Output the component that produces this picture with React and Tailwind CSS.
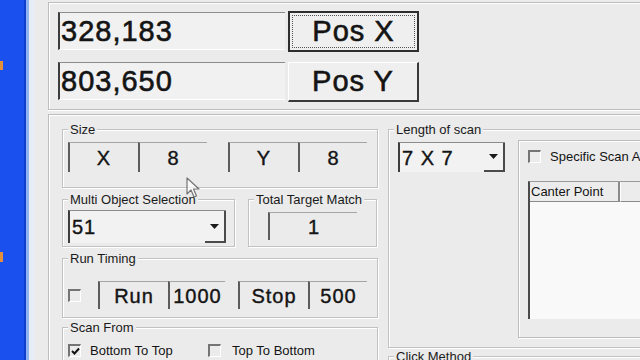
import React from "react";

function Group({ label, className = "", children }) {
  return (
    <div
      className={`relative shrink-0 border border-[#c2c2c2] shadow-[inset_1px_1px_0_#fff,1px_1px_0_#fff] ${className}`}
    >
      <span className="absolute -top-[8px] left-[5px] bg-[#ebebeb] px-[2px] text-[13px] leading-[15px] whitespace-nowrap text-[#1a1a1a]">
        {label}
      </span>
      {children}
    </div>
  );
}

function Cell({ className = "", children }) {
  return (
    <div
      className={`flex h-full shrink-0 items-center justify-center border-t border-l-2 border-t-[#a5a5a5] border-l-[#5c5c5c] text-[20px] leading-none tracking-[1px] [-webkit-text-stroke:0.4px_#141414] ${className}`}
    >
      {children}
    </div>
  );
}

function Check({ checked = false }) {
  return (
    <div className="flex h-[13px] w-[13px] shrink-0 items-center justify-center border-t-2 border-l-2 border-r border-b border-t-[#747474] border-l-[#747474] border-r-white border-b-white">
      {checked && (
        <svg width="9" height="8" viewBox="0 0 9 8">
          <path d="M1 4 L3.5 6.5 L8 1.5" fill="none" stroke="#111" strokeWidth="2" />
        </svg>
      )}
    </div>
  );
}

function Arrow() {
  return (
    <svg width="9" height="5" viewBox="0 0 9 5">
      <path d="M0 0 H9 L4.5 5 Z" fill="#1a1a1a" />
    </svg>
  );
}

function Combo({ className = "", value }) {
  return (
    <div
      className={`flex shrink-0 items-stretch border-t border-l-2 border-t-[#8c8c8c] border-l-[#3c3c3c] bg-[#f2f2f2] ${className}`}
    >
      <div className="flex flex-1 items-center pl-[2px] text-[20px] leading-none tracking-[1px] whitespace-nowrap [-webkit-text-stroke:0.4px_#141414]">
        {value}
      </div>
      <div className="flex w-[21px] items-center justify-center border-r-2 border-b-2 border-r-[#4a4a4a] border-b-[#4a4a4a]">
        <Arrow />
      </div>
    </div>
  );
}

function TextBox({ value }) {
  return (
    <div className="flex h-[38px] w-[227px] shrink-0 items-center border-t border-l-2 border-b border-t-[#8c8c8c] border-l-[#3c3c3c] border-b-white bg-[#f1f1f1] pl-[1px] text-[29px] leading-none tracking-[1px] [-webkit-text-stroke:0.6px_#141414]">
      {value}
    </div>
  );
}

export default function App() {
  return (
    <div className="relative flex h-[360px] w-[640px] overflow-hidden bg-[#ebebeb] font-['Liberation_Sans',Arial,sans-serif] text-[#141414]">
      {/* desktop / window frame strip */}
      <div className="flex w-[24px] shrink-0 flex-col bg-[#1a50ee]">
        <div className="mt-[61px] h-[9px] w-[3px] bg-[#e2913a]" />
        <div className="mt-[182px] h-[10px] w-[3px] bg-[#e2913a]" />
      </div>
      <div className="w-[2px] shrink-0 bg-[#0f3ecf]" />
      <div className="w-[3px] shrink-0 bg-[#8fb2f0]" />
      <div className="w-[5px] shrink-0 bg-[#e6edf7]" />

      <div className="flex min-w-0 flex-1 flex-col pl-[14px]">
        {/* top panel */}
        <div className="mt-[2px] flex h-[108px] shrink-0 flex-col gap-[10px] border-t border-l border-b border-[#bdbdbd] pt-[9px] pl-[9px] shadow-[inset_1px_1px_0_#fff,0_1px_0_#fff]">
          <div className="flex h-[40px] items-start gap-[3px]">
            <TextBox value="328,183" />
            <div className="-mt-[1px] flex h-[41px] w-[131px] shrink-0 border-2 border-[#2e2e2e] bg-[#efefef] p-[2px]">
              <div className="flex flex-1 items-center justify-center border border-dotted border-[#555] text-[29px] leading-none tracking-[1px] [-webkit-text-stroke:0.6px_#141414]">
                Pos X
              </div>
            </div>
          </div>
          <div className="flex h-[40px] items-start gap-[3px]">
            <TextBox value="803,650" />
            <div className="flex h-[40px] w-[131px] shrink-0 items-center justify-center border-t border-l border-r-2 border-b-2 border-t-white border-l-white border-r-[#3a3a3a] border-b-[#3a3a3a] bg-[#efefef] text-[29px] leading-none tracking-[1px] [-webkit-text-stroke:0.6px_#141414]">
              Pos Y
            </div>
          </div>
        </div>

        {/* bottom panel */}
        <div className="mt-[4px] flex flex-1 gap-[10px] border-t border-l border-[#bdbdbd] pt-[14px] pl-[13px] shadow-[inset_1px_1px_0_#fff]">
          {/* left column */}
          <div className="flex w-[316px] shrink-0 flex-col">
            <Group label="Size" className="h-[59px]">
              <div className="flex h-[42px] pt-[12px] pl-[5px]">
                <Cell className="w-[70px]">X</Cell>
                <Cell className="w-[69px]">8</Cell>
                <Cell className="ml-[21px] w-[70px]">Y</Cell>
                <Cell className="w-[69px]">8</Cell>
              </div>
            </Group>

            <div className="mt-[11px] flex h-[48px] shrink-0 gap-[13px]">
              <Group label="Multi Object Selection" className="w-[173px]">
                <div className="pt-[10px] pl-[5px]">
                  <Combo className="h-[33px] w-[158px]" value="51" />
                </div>
              </Group>
              <Group label="Total Target Match" className="w-[129px]">
                <div className="pt-[12px] pl-[19px]">
                  <div className="flex h-[28px] w-[89px] items-center justify-center border-t border-l-2 border-t-[#a5a5a5] border-l-[#5c5c5c] text-[20px] leading-none [-webkit-text-stroke:0.4px_#141414]">
                    1
                  </div>
                </div>
              </Group>
            </div>

            <Group label="Run Timing" className="mt-[11px] h-[60px]">
              <div className="flex h-[50px] items-center pt-[22px] pl-[5px]">
                <Check />
                <div className="ml-[17px] flex h-[28px]">
                  <Cell className="w-[70px]">Run</Cell>
                  <Cell className="w-[57px]">1000</Cell>
                  <Cell className="ml-[13px] w-[70px]">Stop</Cell>
                  <Cell className="w-[59px]">500</Cell>
                </div>
              </div>
            </Group>

            <Group label="Scan From" className="mt-[9px] h-[60px]">
              <div className="flex items-center pt-[15px] pl-[5px] text-[13px] leading-[15px]">
                <div className="flex w-[140px] items-center">
                  <Check checked />
                  <span className="ml-[9px] whitespace-nowrap">Bottom To Top</span>
                </div>
                <Check />
                <span className="ml-[11px] whitespace-nowrap">Top To Bottom</span>
              </div>
            </Group>
          </div>

          {/* right column */}
          <div className="flex w-[270px] shrink-0 flex-col">
            <Group label="Length of scan" className="h-[219px]">
              <div className="flex items-start pt-[12px] pl-[9px]">
                <Combo className="h-[30px] w-[107px]" value="7 X 7" />
                <div className="-mt-[2px] ml-[13px] flex h-[198px] flex-1 flex-col border border-[#bcbcbc] pt-[8px] pl-[9px] shadow-[inset_1px_1px_0_#fff,1px_1px_0_#fff]">
                  <div className="flex items-center text-[13px] leading-[15px]">
                    <Check />
                    <span className="ml-[9px] whitespace-nowrap">Specific Scan Area</span>
                  </div>
                  <div className="mt-[17px] flex h-[138px] flex-col border-t border-l-2 border-t-[#9a9a9a] border-l-[#4a4a4a] bg-[#f9f9f9]">
                    <div className="flex h-[20px] shrink-0 bg-[#ececec] text-[13px] leading-[15px]">
                      <div className="flex w-[90px] items-center border-r-2 border-b border-r-[#8a8a8a] border-b-[#8a8a8a] pl-[1px] whitespace-nowrap">
                        Canter Point
                      </div>
                      <div className="flex-1 border-b border-l border-b-[#8a8a8a] border-l-white" />
                    </div>
                    <div className="flex-1" />
                  </div>
                </div>
              </div>
            </Group>
            <Group label="Click Method" className="mt-[8px] h-[40px]" />
          </div>
        </div>
      </div>

      {/* mouse cursor */}
      <svg
        className="absolute top-[177px] left-[186px] opacity-70"
        width="14"
        height="22"
        viewBox="0 0 14 22"
      >
        <path
          d="M1 1 L1 17 L5 13 L8 20 L10.5 19 L7.5 12 L13 12 Z"
          fill="#fff"
          stroke="#444"
          strokeWidth="1.2"
          strokeLinejoin="round"
        />
      </svg>
    </div>
  );
}
